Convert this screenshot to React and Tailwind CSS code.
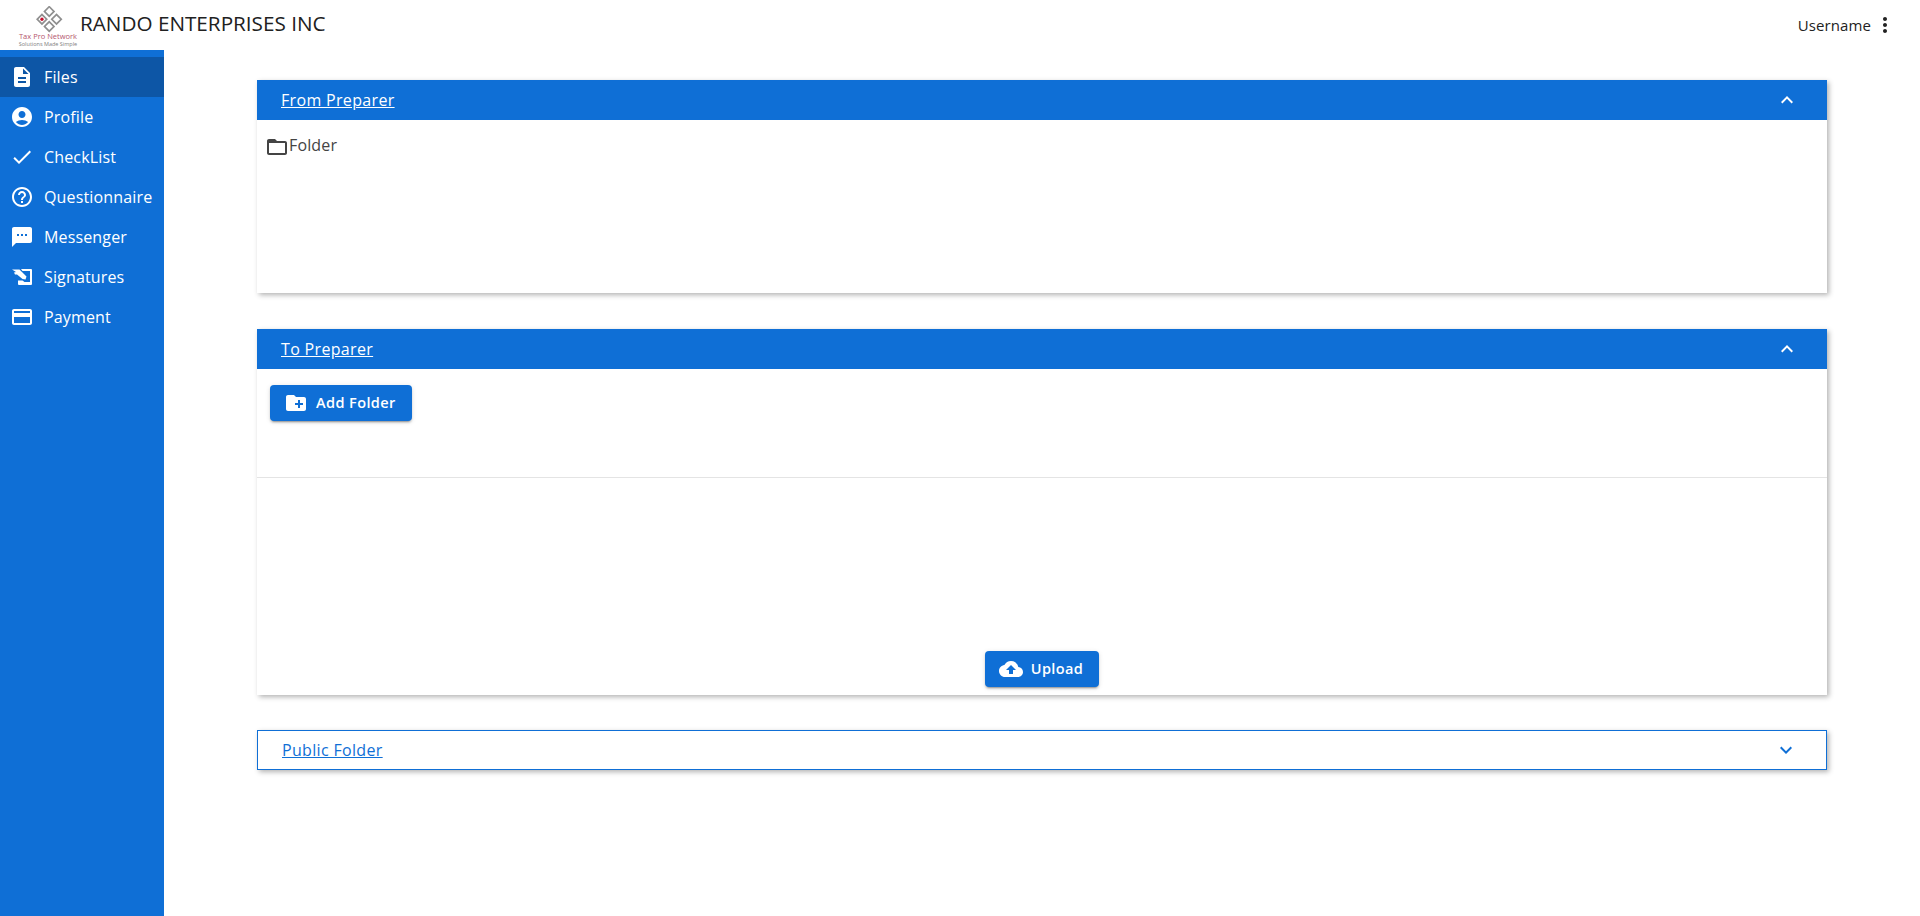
import React from 'react';

const Icon = ({ d, size = 24, className = '' }) => (
  <svg viewBox="0 0 24 24" width={size} height={size} fill="currentColor" className={`shrink-0 ${className}`}>
    <path d={d} />
  </svg>
);

const icons = {
  file: 'M14 2H6c-1.1 0-1.99.9-1.99 2L4 20c0 1.1.89 2 1.99 2H18c1.1 0 2-.9 2-2V8l-6-6zm2 16H8v-2h8v2zm0-4H8v-2h8v2zm-3-5V3.5L18.5 9H13z',
  profile: 'M12 2C6.48 2 2 6.48 2 12s4.48 10 10 10 10-4.48 10-10S17.52 2 12 2zm0 4c1.93 0 3.5 1.57 3.5 3.5S13.93 13 12 13s-3.5-1.57-3.5-3.5S10.07 6 12 6zm0 14c-2.03 0-4.43-.82-6.14-2.88C7.55 15.8 9.68 15 12 15s4.45.8 6.14 2.12C16.43 19.18 14.03 20 12 20z',
  check: 'M9 16.17 4.83 12l-1.42 1.41L9 19 21 7l-1.41-1.41z',
  help: 'M11 18h2v-2h-2v2zm1-16C6.48 2 2 6.48 2 12s4.48 10 10 10 10-4.48 10-10S17.52 2 12 2zm0 18c-4.41 0-8-3.59-8-8s3.59-8 8-8 8 3.59 8 8-3.59 8-8 8zm0-14c-2.21 0-4 1.79-4 4h2c0-1.1.9-2 2-2s2 .9 2 2c0 2-3 1.75-3 5h2c0-2.25 3-2.5 3-5 0-2.21-1.79-4-4-4z',
  sms: 'M20 2H4c-1.1 0-1.99.9-1.99 2L2 22l4-4h14c1.1 0 2-.9 2-2V4c0-1.1-.9-2-2-2zM9 11H7V9h2v2zm4 0h-2V9h2v2zm4 0h-2V9h2v2z',
  sign: 'M11 4h10a1 1 0 0 1 1 1v14a1 1 0 0 1-1 1H9a1 1 0 0 1-1-1v-3.5h4.5l2 1.5H20V6h-7.5L11 4zM2 4.5h7.5l7 7-1 3-3-.5L7 9.5 5 9.5l-1-2 2-.5L2 4.5z',
  card: 'M20 4H4c-1.11 0-1.99.89-1.99 2L2 18c0 1.11.89 2 2 2h16c1.11 0 2-.89 2-2V6c0-1.11-.89-2-2-2zm0 14H4v-6h16v6zm0-10H4V6h16v2z',
  folder: 'M20 6h-8l-2-2H4c-1.1 0-1.99.9-1.99 2L2 18c0 1.1.9 2 2 2h16c1.1 0 2-.9 2-2V8c0-1.1-.9-2-2-2zm0 12H4V8h16v10z',
  newFolder: 'M20 6h-8l-2-2H4c-1.11 0-1.99.89-1.99 2L2 18c0 1.11.89 2 2 2h16c1.11 0 2-.89 2-2V8c0-1.11-.89-2-2-2zm-1 8h-3v3h-2v-3h-3v-2h3V9h2v3h3v2z',
  upload: 'M19.35 10.04C18.67 6.59 15.64 4 12 4 9.11 4 6.6 5.64 5.35 8.04 2.34 8.36 0 10.91 0 14c0 3.31 2.69 6 6 6h13c2.76 0 5-2.24 5-5 0-2.64-2.05-4.78-4.65-4.96zM14 13v4h-4v-4H7l5-5 5 5h-3z',
  more: 'M12 8c1.1 0 2-.9 2-2s-.9-2-2-2-2 .9-2 2 .9 2 2 2zm0 2c-1.1 0-2 .9-2 2s.9 2 2 2 2-.9 2-2-.9-2-2-2zm0 6c-1.1 0-2 .9-2 2s.9 2 2 2 2-.9 2-2-.9-2-2-2z',
  less: 'M12 8l-6 6 1.41 1.41L12 10.83l4.59 4.58L18 14z',
  expand: 'M16.59 8.59 12 13.17 7.41 8.59 6 10l6 6 6-6z',
};

const navItems = [
  { label: 'Files', icon: icons.file, active: true },
  { label: 'Profile', icon: icons.profile },
  { label: 'CheckList', icon: icons.check },
  { label: 'Questionnaire', icon: icons.help },
  { label: 'Messenger', icon: icons.sms },
  { label: 'Signatures', icon: icons.sign },
  { label: 'Payment', icon: icons.card },
];

const Logo = () => (
  <div className="w-[64px] h-[46px] flex flex-col items-center shrink-0">
    <svg viewBox="0 0 26 26" width="27" height="27" className="mt-[4px] ml-[2px] shrink-0">
      <g fill="none" stroke="#8f8f8f" strokeWidth="1.6">
        <rect x="9.5" y="2" width="6.5" height="6.5" transform="rotate(45 12.75 5.25)" />
        <rect x="2.5" y="9.5" width="6.5" height="6.5" transform="rotate(45 5.75 12.75)" />
        <rect x="16.5" y="9.5" width="6.5" height="6.5" transform="rotate(45 19.75 12.75)" />
        <rect x="9.5" y="16.5" width="6.5" height="6.5" transform="rotate(45 12.75 19.75)" />
      </g>
      <circle cx="5.75" cy="12.75" r="1.6" fill="#c8102e" />
    </svg>
    <span className="text-[7.5px] leading-[9px] -mt-[1px] font-medium whitespace-nowrap text-[#b5566e]">Tax Pro Network</span>
    <span className="text-[5.5px] leading-[7px] whitespace-nowrap text-[#808080]">Solutions Made Simple</span>
  </div>
);

const PanelHeader = ({ title, open = true }) => (
  <div className={`h-full flex items-center justify-between pl-[24px] pr-[28px] ${open ? 'bg-[#0f6fd6] text-white' : 'text-[#0f6fd6]'}`}>
    <span className="text-[16px] font-medium tracking-[0.33px] underline">{title}</span>
    <Icon d={open ? icons.less : icons.expand} />
  </div>
);

const Button = ({ icon, children }) => (
  <button className="h-[36px] pl-[14px] pr-[16px] flex items-center gap-[8px] bg-[#0f6fd6] text-white text-[14.5px] font-semibold tracking-[0.4px] rounded-[4px] shadow-[0_3px_1px_-2px_rgba(0,0,0,0.2),0_2px_2px_0_rgba(0,0,0,0.14),0_1px_5px_0_rgba(0,0,0,0.12)]">
    <Icon d={icon} />
    {children}
  </button>
);

const panelShadow = 'shadow-[2px_2px_5px_rgba(0,0,0,0.3)]';

const App = () => {
  return (
    <div className="h-[916px] overflow-hidden flex flex-col bg-white font-['Open_Sans',sans-serif]">
      <header className="h-[50px] shrink-0 flex items-center pl-[16px] pr-[23px]">
        <Logo />
        <span className="text-[20.7px] text-[#212121] mb-[2px]">RANDO ENTERPRISES INC</span>
        <div className="ml-auto flex items-center gap-[2px] text-[#222222]">
          <span className="text-[15px] tracking-[0.1px]">Username</span>
          <Icon d={icons.more} />
        </div>
      </header>
      <div className="flex-1 flex min-h-0">
        <aside className="w-[164px] shrink-0 bg-[#0f6fd6] pt-[7px] text-white">
          {navItems.map((item) => (
            <div
              key={item.label}
              className={`h-[40px] flex items-center gap-[10px] pl-[10px] text-[16px] tracking-[0.15px] ${item.active ? 'bg-[#0d56a6]' : ''}`}
            >
              <Icon d={item.icon} />
              <span>{item.label}</span>
            </div>
          ))}
        </aside>
        <main className="flex-1 pt-[30px] pl-[93px] pr-[93px] flex flex-col gap-[36px]">
          <section className={`h-[213px] bg-white ${panelShadow}`}>
            <div className="h-[40px]">
              <PanelHeader title="From Preparer" />
            </div>
            <div className="flex items-start pl-[8px] pt-[13px] text-[#444444] text-[16px] tracking-[0.15px]">
              <Icon d={icons.folder} className="mt-[2px]" />
              <span className="leading-[24px]">Folder</span>
            </div>
          </section>
          <section className={`h-[366px] bg-white flex flex-col ${panelShadow}`}>
            <div className="h-[40px]">
              <PanelHeader title="To Preparer" />
            </div>
            <div className="h-[109px] border-b border-[#e4e4e4] pl-[13px] pt-[16px]">
              <div className="w-fit">
                <Button icon={icons.newFolder}>Add Folder</Button>
              </div>
            </div>
            <div className="flex-1 flex items-end justify-center pb-[8px]">
              <Button icon={icons.upload}>Upload</Button>
            </div>
          </section>
          <section className={`h-[40px] -mt-[1px] bg-white border border-[#0f6fd6] ${panelShadow}`}>
            <PanelHeader title="Public Folder" open={false} />
          </section>
        </main>
      </div>
    </div>
  );
};

export default App;
